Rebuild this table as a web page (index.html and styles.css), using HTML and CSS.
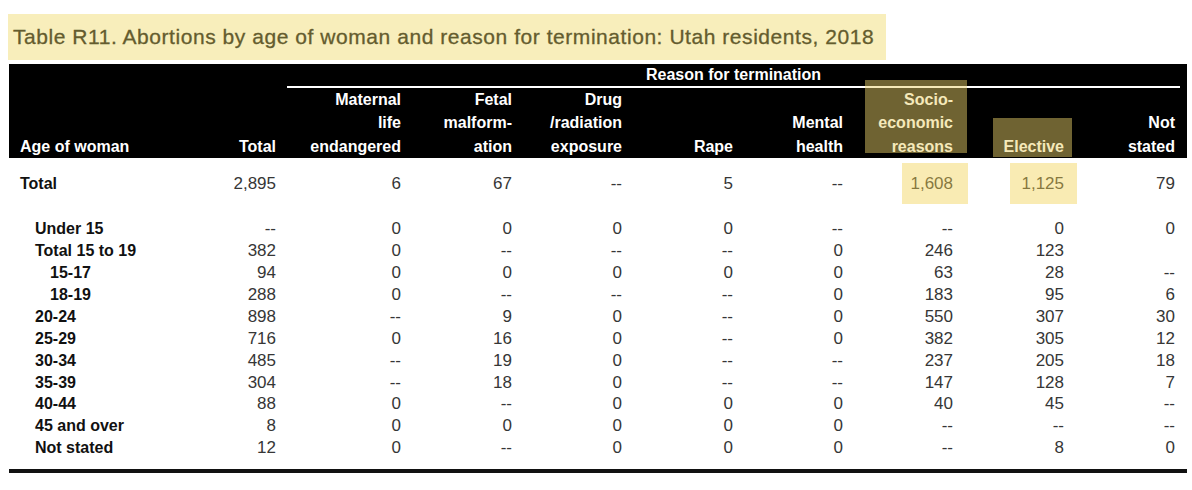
FILE: index.html
```html
<!DOCTYPE html>
<html lang="en">
<head>
<meta charset="utf-8">
<title>Table R11</title>
<link rel="stylesheet" href="styles.css">
</head>
<body>
<div class="page">
  <h1 class="title">Table R11. Abortions by age of woman and reason for termination: Utah residents, 2018</h1>
  <table class="data">
    <colgroup>
      <col class="c-age"><col class="c-total"><col class="c-mat"><col class="c-std"><col class="c-std2"><col class="c-std"><col class="c-std2"><col class="c-std2"><col class="c-std"><col class="c-last">
    </colgroup>
    <thead>
      <tr class="h1">
        <th></th><th></th>
        <th colspan="8" class="group"><div class="group-label">Reason for termination</div></th>
      </tr>
      <tr class="h2">
        <th class="age">Age of woman</th>
        <th>Total</th>
        <th>Maternal<br>life<br>endangered</th>
        <th>Fetal<br>malform-<br>ation</th>
        <th>Drug<br>/radiation<br>exposure</th>
        <th>Rape</th>
        <th>Mental<br>health</th>
        <th class="hl hl-socio">Socio-<br>economic<br>reasons</th>
        <th class="hl hl-elective">Elective</th>
        <th class="last">Not<br>stated</th>
      </tr>
    </thead>
    <tbody>
      <tr class="total">
        <th class="lvl0">Total</th>
        <td>2,895</td><td>6</td><td>67</td><td>--</td><td>5</td><td>--</td>
        <td class="hl hl-d1">1,608</td><td class="hl hl-d2">1,125</td><td class="last">79</td>
      </tr>
      <tr>
        <th class="lvl1">Under 15</th>
        <td>--</td><td>0</td><td>0</td><td>0</td><td>0</td><td>--</td><td>--</td><td>0</td><td class="last">0</td>
      </tr>
      <tr>
        <th class="lvl1">Total 15 to 19</th>
        <td>382</td><td>0</td><td>--</td><td>--</td><td>--</td><td>0</td><td>246</td><td>123</td><td class="last"></td>
      </tr>
      <tr>
        <th class="lvl2">15-17</th>
        <td>94</td><td>0</td><td>0</td><td>0</td><td>0</td><td>0</td><td>63</td><td>28</td><td class="last">--</td>
      </tr>
      <tr>
        <th class="lvl2">18-19</th>
        <td>288</td><td>0</td><td>--</td><td>--</td><td>--</td><td>0</td><td>183</td><td>95</td><td class="last">6</td>
      </tr>
      <tr>
        <th class="lvl1">20-24</th>
        <td>898</td><td>--</td><td>9</td><td>0</td><td>--</td><td>0</td><td>550</td><td>307</td><td class="last">30</td>
      </tr>
      <tr>
        <th class="lvl1">25-29</th>
        <td>716</td><td>0</td><td>16</td><td>0</td><td>--</td><td>0</td><td>382</td><td>305</td><td class="last">12</td>
      </tr>
      <tr>
        <th class="lvl1">30-34</th>
        <td>485</td><td>--</td><td>19</td><td>0</td><td>--</td><td>--</td><td>237</td><td>205</td><td class="last">18</td>
      </tr>
      <tr>
        <th class="lvl1">35-39</th>
        <td>304</td><td>--</td><td>18</td><td>0</td><td>--</td><td>--</td><td>147</td><td>128</td><td class="last">7</td>
      </tr>
      <tr>
        <th class="lvl1">40-44</th>
        <td>88</td><td>0</td><td>--</td><td>0</td><td>0</td><td>0</td><td>40</td><td>45</td><td class="last">--</td>
      </tr>
      <tr>
        <th class="lvl1">45 and over</th>
        <td>8</td><td>0</td><td>0</td><td>0</td><td>0</td><td>0</td><td>--</td><td>--</td><td class="last">--</td>
      </tr>
      <tr class="end">
        <th class="lvl1">Not stated</th>
        <td>12</td><td>0</td><td>--</td><td>0</td><td>0</td><td>0</td><td>--</td><td>8</td><td class="last">0</td>
      </tr>
    </tbody>
  </table>
</div>
</body>
</html>
```
FILE: styles.css
```css
* { box-sizing: border-box; }

html, body {
  margin: 0;
  background: #ffffff;
}

body {
  font-family: "Liberation Sans", Arial, Helvetica, sans-serif;
  color: #333333;
}

.page {
  padding: 14px 5px 0 8px;
}

.title {
  display: inline-block;
  margin: 0;
  padding: 0 12px 0 5px;
  background: #f8eebb;
  color: #645c2e;
  font-size: 21px;
  font-weight: normal;
  letter-spacing: 0.55px;
  line-height: 46px;
  white-space: nowrap;
  -webkit-text-stroke: 0.3px #645c2e;
}

.data {
  margin: 4px 0 0 1px;
  width: 1178px;
  table-layout: fixed;
  border-collapse: collapse;
  border-spacing: 0;
  font-size: 16px;
  border-bottom: 4px solid #111111;
}

.c-age { width: 141px; }
.c-total { width: 126px; }
.c-mat { width: 125px; }
.c-std { width: 111px; }
.c-std2 { width: 110px; }
.c-last { width: 123px; }

/* header */
thead tr {
  background: #000000;
}

thead th {
  color: #ffffff;
  font-weight: bold;
  text-align: right;
  padding: 0;
  vertical-align: bottom;
  white-space: nowrap;
}

.h1 th {
  line-height: 22px;
  height: 22px;
  vertical-align: top;
}

.group-label {
  text-align: center;
  margin: 0 7px 0 11px;
  border-bottom: 2px solid #ffffff;
  line-height: 22px;
}

.h2 th {
  line-height: 23.4px;
  padding-bottom: 0;
}

.h2 th.age {
  text-align: left;
  padding-left: 11px;
}

th.last, td.last {
  padding-right: 12px;
}

/* body */
tbody th {
  text-align: left;
  font-weight: bold;
  font-size: 16px;
  color: #111111;
  white-space: nowrap;
  padding: 0;
  line-height: 21.9px;
}

tbody td {
  text-align: right;
  padding: 0;
  font-size: 17px;
  line-height: 21.9px;
  color: #363636;
  white-space: nowrap;
}

tbody th.lvl0 { padding-left: 11px; }
tbody th.lvl1 { padding-left: 26px; }
tbody th.lvl2 { padding-left: 41px; }

tbody tr.total th,
tbody tr.total td {
  padding-top: 15px;
  padding-bottom: 23px;
  line-height: 22px;
}

tbody tr.total td.last {
  padding-right: 12px;
}

tbody tr.end th,
tbody tr.end td {
  padding-bottom: 10px;
}

tbody tr.end td.last {
  padding-right: 12px;
}

/* highlighter marks laid over the table */
.hl {
  position: relative;
}

.hl::after {
  content: "";
  position: absolute;
  pointer-events: none;
}

.hl-socio::after {
  top: -8px;
  bottom: 5px;
  right: -14px;
  width: 102px;
  background: rgba(234, 208, 105, 0.475);
}

.hl-elective::after {
  top: 30px;
  bottom: 1px;
  right: -8px;
  width: 79px;
  background: rgba(234, 208, 105, 0.475);
}

.hl-d1::after {
  top: 5px;
  bottom: 14px;
  right: -15px;
  width: 66px;
  background: rgba(242, 209, 79, 0.43);
}

.hl-d2::after {
  top: 5px;
  bottom: 14px;
  right: -13px;
  width: 67px;
  background: rgba(242, 209, 79, 0.43);
}
```
